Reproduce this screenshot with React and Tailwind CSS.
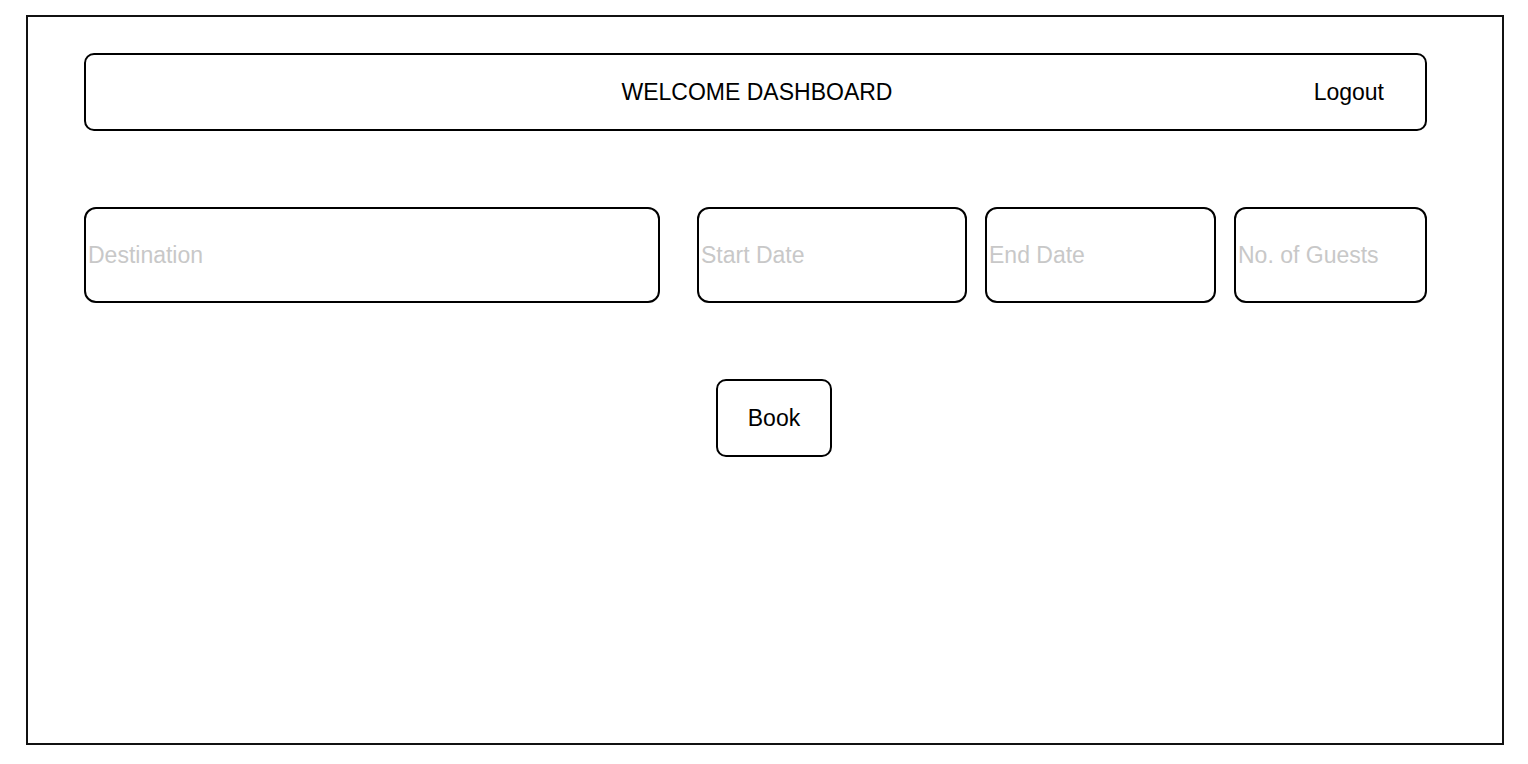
export default function App() {
  return (
    <div className="min-h-screen bg-white pt-[15px] pl-[26px]" style={{ fontFamily: '"Liberation Sans", Arial, sans-serif' }}>
      <div className="w-[1478px] h-[730px] border-2 border-[#111] px-[56px] pt-[36px]">
        {/* Header */}
        <div className="w-[1343px] h-[78px] border-2 border-black rounded-[10px] grid grid-cols-[1fr_auto_1fr] items-center">
          <div />
          <h1 className="text-[23px] text-black ml-[3px]">WELCOME DASHBOARD</h1>
          <button className="justify-self-end mr-[41px] text-[23px] text-black">Logout</button>
        </div>

        {/* Search inputs */}
        <div className="mt-[76px] flex w-[1343px]">
          <input
            placeholder="Destination"
            className="w-[576px] h-[96px] border-2 border-black rounded-[12px] px-[2px] text-[23px] placeholder:text-[#c8c8c8] outline-none"
          />
          <input
            placeholder="Start Date"
            className="ml-[37px] w-[270px] h-[96px] border-2 border-black rounded-[12px] px-[2px] text-[23px] placeholder:text-[#c8c8c8] outline-none"
          />
          <input
            placeholder="End Date"
            className="ml-[18px] w-[231px] h-[96px] border-2 border-black rounded-[12px] px-[2px] text-[23px] placeholder:text-[#c8c8c8] outline-none"
          />
          <input
            placeholder="No. of Guests"
            className="ml-[18px] w-[193px] h-[96px] border-2 border-black rounded-[12px] px-[2px] text-[23px] placeholder:text-[#c8c8c8] outline-none"
          />
        </div>

        {/* Action */}
        <button className="mt-[76px] ml-[632px] w-[116px] h-[78px] border-2 border-black rounded-[10px] text-[23px] text-black">
          Book
        </button>
      </div>
    </div>
  );
}
